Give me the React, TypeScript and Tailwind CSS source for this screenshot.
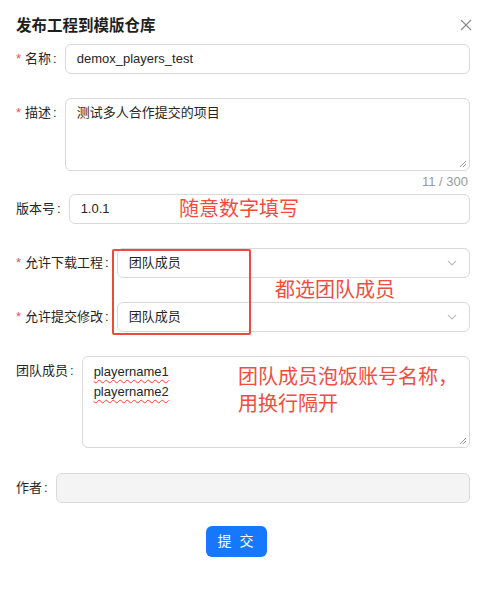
import React from "react";

const FONT = '"Liberation Sans", "Noto Sans CJK SC", sans-serif';

function Label({ text, required }: { text: string; required?: boolean }) {
  return (
    <div className="flex h-[30px] shrink-0 items-center whitespace-nowrap text-[13px] text-[#262626]">
      {required && <span className="mr-[4px] text-[13px] text-[#ff4d4f]">*</span>}
      <span>{text}</span>
      <span className="ml-[2px] mr-[8px]">:</span>
    </div>
  );
}

function Chevron() {
  return (
    <svg width="10" height="6" viewBox="0 0 10 6" className="shrink-0">
      <path d="M1 1 L5 5 L9 1" fill="none" stroke="#bfbfbf" strokeWidth="1.1" />
    </svg>
  );
}

function Resize() {
  return (
    <svg width="8" height="8" viewBox="0 0 8 8" className="absolute bottom-[2px] right-[2px]">
      <path d="M7 1 L1 7 M7 4 L4 7" stroke="#8c8c8c" strokeWidth="0.9" />
    </svg>
  );
}

export default function App() {
  return (
    <div
      className="relative h-[599px] w-[488px] overflow-hidden bg-white pl-[16px] pr-[18px]"
      style={{ fontFamily: FONT }}
    >
      {/* Title */}
      <div className="mt-[14px] flex h-[24px] items-center justify-between">
        <div className="text-[15.5px] font-bold text-[#1f1f1f]">发布工程到模版仓库</div>
        <svg width="12" height="12" viewBox="0 0 12 12" className="-mr-[2px] mb-[2px]">
          <path d="M1 1 L11 11 M11 1 L1 11" stroke="#8c8c8c" strokeWidth="1.2" />
        </svg>
      </div>

      {/* Name */}
      <div className="mt-[6px] flex">
        <Label text="名称" required />
        <div className="flex h-[30px] flex-1 items-center rounded-[6px] border border-[#d9d9d9] px-[11px] text-[13px] text-[#262626]">
          demox_players_test
        </div>
      </div>

      {/* Description */}
      <div className="mt-[24px] flex">
        <Label text="描述" required />
        <div className="flex-1">
          <div className="relative h-[73px] rounded-[6px] border border-[#d9d9d9] px-[11px] pt-[4px] text-[13px] leading-[20px] text-[#262626]">
            测试多人合作提交的项目
            <Resize />
          </div>
          <div className="flex h-[22px] items-center justify-end pr-[2px] text-[13px] text-[#9a9a9a]">11 / 300</div>
        </div>
      </div>

      {/* Version */}
      <div className="relative mt-[1px] flex">
        <Label text="版本号" />
        <div className="flex h-[30px] flex-1 items-center rounded-[6px] border border-[#d9d9d9] px-[11px] text-[13px] text-[#262626]">
          1.0.1
        </div>
        <div className="absolute left-[163px] top-[1px] text-[20px] leading-[28px] text-[#f04d40]">随意数字填写</div>
      </div>

      {/* Select 1 */}
      <div className="relative mt-[24px] flex">
        <Label text="允许下载工程" required />
        <div className="flex h-[30px] flex-1 items-center justify-between rounded-[6px] border border-[#d9d9d9] pl-[11px] pr-[12px] text-[13px] text-[#262626]">
          <span>团队成员</span>
          <Chevron />
        </div>
        <div className="absolute left-[259px] top-[28px] text-[20px] leading-[28px] text-[#f04d40]">都选团队成员</div>
      </div>

      {/* Select 2 */}
      <div className="mt-[24px] flex">
        <Label text="允许提交修改" required />
        <div className="flex h-[30px] flex-1 items-center justify-between rounded-[6px] border border-[#d9d9d9] pl-[11px] pr-[12px] text-[13px] text-[#262626]">
          <span>团队成员</span>
          <Chevron />
        </div>
      </div>

      {/* Team */}
      <div className="relative mt-[24px] flex">
        <Label text="团队成员" />
        <div className="relative h-[92px] flex-1 rounded-[6px] border border-[#d9d9d9] px-[11px] pt-[5px] text-[13px] leading-[20px] text-[#262626]">
          <div className="underline decoration-[#ff3b30] decoration-wavy decoration-1 underline-offset-[3px]">playername1</div>
          <div className="underline decoration-[#ff3b30] decoration-wavy decoration-1 underline-offset-[3px]">playername2</div>
          <Resize />
        </div>
        <div className="absolute left-[222px] top-[8px] text-[20px] leading-[27px] text-[#f04d40]">
          <div>团队成员泡饭账号名称，</div>
          <div>用换行隔开</div>
        </div>
      </div>

      {/* Author */}
      <div className="mt-[25px] flex">
        <Label text="作者" />
        <div className="h-[30px] flex-1 rounded-[6px] border border-[#d9d9d9] bg-[#f4f4f4]" />
      </div>

      {/* Submit */}
      <div className="mt-[23px] flex justify-center pr-[13px]">
        <div className="flex h-[31px] w-[61px] items-center justify-center rounded-[6px] bg-[#1677ff] text-[14px] tracking-[2px] text-white">
          提 交
        </div>
      </div>

      {/* Red annotation box */}
      <div className="pointer-events-none absolute left-[112px] top-[249px] h-[86px] w-[139px] rounded-[2px] border-2 border-[#ec4a3c]" />
    </div>
  );
}
